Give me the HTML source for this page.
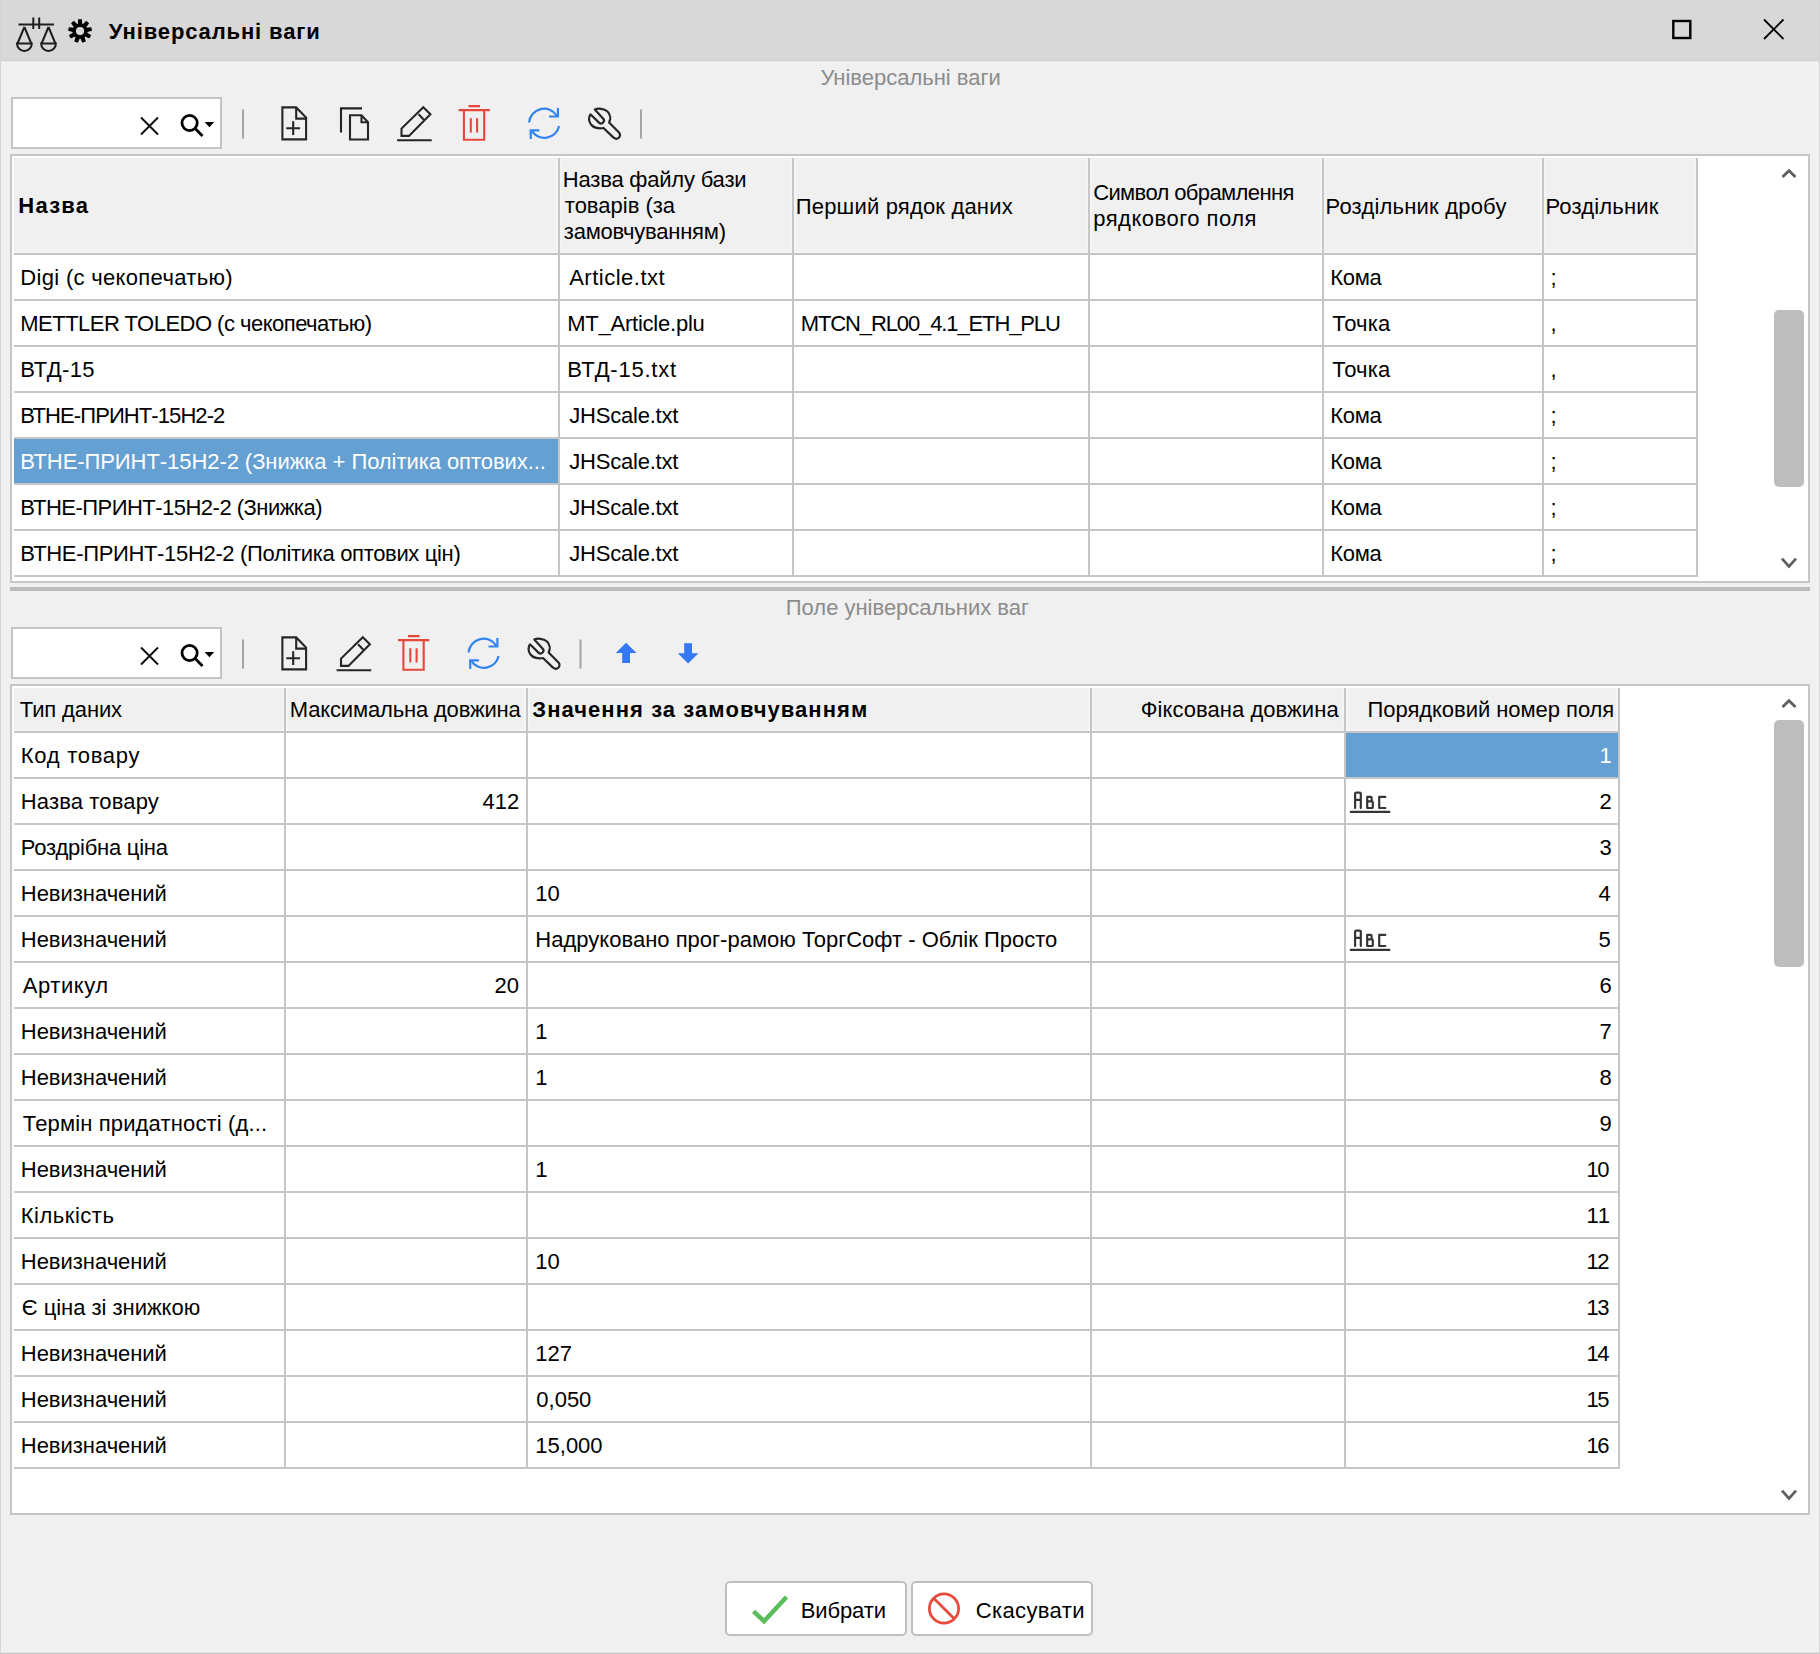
<!DOCTYPE html>
<html><head><meta charset="utf-8"><style>
html,body{margin:0;padding:0;}
body{width:1820px;height:1654px;position:relative;overflow:hidden;background:#f0f0f0;font-family:"Liberation Sans", sans-serif;}
.t{position:absolute;font-size:22px;line-height:26px;white-space:nowrap;}
svg{position:absolute;}
</style></head><body>
<div style="position:absolute;left:0px;top:0px;width:1820px;height:59px;background:#d8d8d8;"></div><div style="position:absolute;left:0px;top:59px;width:1820px;height:2px;background:#d4d4d4;"></div><div style="position:absolute;left:0px;top:61px;width:1820px;height:1px;background:#e4e4e4;"></div><div style="position:absolute;left:0px;top:62px;width:1820px;height:1px;background:#f3f3f3;"></div><div style="position:absolute;left:0px;top:0px;width:1px;height:1654px;background:#d4d4d4;"></div><div style="position:absolute;left:1819px;top:0px;width:1px;height:1654px;background:#d4d4d4;"></div><div style="position:absolute;left:0px;top:1653px;width:1820px;height:1px;background:#c6c6c6;"></div><div style="position:absolute;left:1px;top:62px;width:1px;height:1591px;background:#f3f3f3;"></div><div style="position:absolute;left:1818px;top:62px;width:1px;height:1591px;background:#f3f3f3;"></div><div style="position:absolute;left:1px;top:1651px;width:1818px;height:1px;background:#f3f3f3;"></div><div style="position:absolute;left:1px;top:1652px;width:1818px;height:1px;background:#e2e2e2;"></div><svg style="position:absolute;left:0;top:0" width="120" height="60" viewBox="0 0 120 60">
<g fill="none" stroke="#1e1e1e" stroke-width="2">
<line x1="18.5" y1="24.5" x2="54" y2="24.5"/>
<line x1="33.3" y1="17.5" x2="33.3" y2="29"/>
<line x1="39.2" y1="17.5" x2="39.2" y2="29"/>
<path d="M24.4 27 L17.5 43.5 M24.4 27 L31.3 43.5"/>
<path d="M48.5 27 L41.6 43.5 M48.5 27 L55.4 43.5"/>
<path d="M17 43.5 H31.8 A7.4 7.4 0 0 1 17 43.5 Z"/>
<path d="M41.1 43.5 H55.9 A7.4 7.4 0 0 1 41.1 43.5 Z"/>
</g>
<g transform="translate(80.05 31.05)">
<circle r="5.8" fill="none" stroke="#000" stroke-width="3.4"/>
<path d="M-2.3 -6 L-1.9 -11.8 H1.9 L2.3 -6 Z" fill="#000" transform="rotate(0)"/><path d="M-2.3 -6 L-1.9 -11.8 H1.9 L2.3 -6 Z" fill="#000" transform="rotate(40)"/><path d="M-2.3 -6 L-1.9 -11.8 H1.9 L2.3 -6 Z" fill="#000" transform="rotate(80)"/><path d="M-2.3 -6 L-1.9 -11.8 H1.9 L2.3 -6 Z" fill="#000" transform="rotate(120)"/><path d="M-2.3 -6 L-1.9 -11.8 H1.9 L2.3 -6 Z" fill="#000" transform="rotate(160)"/><path d="M-2.3 -6 L-1.9 -11.8 H1.9 L2.3 -6 Z" fill="#000" transform="rotate(200)"/><path d="M-2.3 -6 L-1.9 -11.8 H1.9 L2.3 -6 Z" fill="#000" transform="rotate(240)"/><path d="M-2.3 -6 L-1.9 -11.8 H1.9 L2.3 -6 Z" fill="#000" transform="rotate(280)"/><path d="M-2.3 -6 L-1.9 -11.8 H1.9 L2.3 -6 Z" fill="#000" transform="rotate(320)"/>
</g>
</svg><svg style="position:absolute;left:1650px;top:0px" width="170" height="60" viewBox="1650 0 170 60">
<rect x="1673.3" y="21" width="17" height="17" fill="none" stroke="#000" stroke-width="2.4"/>
<path d="M1764 19.5 L1783.5 39 M1783.5 19.5 L1764 39" stroke="#000" stroke-width="1.8" fill="none"/>
</svg><div style="position:absolute;left:11px;top:97px;width:211px;height:52px;background:#fff;box-sizing:border-box;border:2px solid #c4c4c4;"></div><svg style="position:absolute;left:0;top:90px" width="700" height="60" viewBox="0 90 700 60">
<path d="M141 117.5 L158 134.5 M158 117.5 L141 134.5" stroke="#111" stroke-width="2" fill="none"/>
<circle cx="189.6" cy="123" r="7.6" stroke="#000" stroke-width="2.8" fill="none"/>
<line x1="195.4" y1="128.8" x2="202.5" y2="135.9" stroke="#000" stroke-width="2.8"/>
<path d="M204.6 122 H214.2 L209.4 127.2 Z" fill="#000"/>
<rect x="242" y="109.5" width="2" height="29" fill="#a4a4a4"/>
<g fill="none" stroke="#262626" stroke-width="2.1" stroke-linejoin="miter">
<path d="M282.4 107.4 H296.2 L306.1 117.6 V139.4 H282.4 Z"/>
<path d="M296.2 107.4 V118.6 H306.1"/>
<path d="M286.3 128.2 H300.1 M293.2 121.3 V135.1"/>
</g><g fill="none" stroke="#262626" stroke-width="2.1">
<path d="M341 132.6 V108.4 H362"/>
<path d="M350 115.3 H361.5 L368 122.2 V139.5 H350 Z"/>
<path d="M361.5 115.3 V122.2 H368"/>
</g><g transform="translate(0 0)"><g fill="none" stroke="#262626" stroke-width="2.1" stroke-linejoin="miter">
<path d="M397.1 140.3 H431.7"/>
<path d="M423.3 107.2 L430.4 114.3 L409 135.9 H401.5 V128.6 Z"/>
<path d="M418.6 114.3 L423.8 119.8"/>
</g>
<g fill="none" stroke="#e5473a" stroke-width="2.1">
<path d="M458.6 110.1 H489.8 M468.5 106.1 H480"/>
<path d="M463.9 110.1 V139.7 H484.2 V110.1"/>
<path d="M470.8 118.2 V132.6 M477.1 118.2 V132.6"/>
</g>
<g fill="none" stroke="#3284f2" stroke-width="2.2">
<path d="M529.1 122.5 A15 15 0 0 1 556.8 115.8"/>
<path d="M557.9 108 V116.5 H549"/>
<path d="M559.1 126 A15 15 0 0 1 531.6 130.6"/>
<path d="M530.7 139 V130.3 H539.4"/>
</g>
<g fill="none" stroke="#262626" stroke-width="2.2" stroke-linejoin="round">
<path d="M594.8 109.6 C598 108 604 108.5 607.5 111.5 C610.5 114.5 611 119 609.1 122.5 L619 132.5 A3.6 3.6 0 0 1 613.5 137.6 L603.5 128 C599 129 593.5 128 591 124.5 C588.5 121.5 588.5 117 590.4 114.3 L599 122.6 A2.9 2.9 0 0 0 603 118.4 Z"/>
</g>
<rect x="640" y="109.5" width="2" height="29" fill="#a4a4a4"/>
</g></svg><div style="position:absolute;left:11px;top:627px;width:211px;height:52px;background:#fff;box-sizing:border-box;border:2px solid #c4c4c4;"></div><svg style="position:absolute;left:0;top:620px" width="700" height="60" viewBox="0 90 700 60">
<path d="M141 117.5 L158 134.5 M158 117.5 L141 134.5" stroke="#111" stroke-width="2" fill="none"/>
<circle cx="189.6" cy="123" r="7.6" stroke="#000" stroke-width="2.8" fill="none"/>
<line x1="195.4" y1="128.8" x2="202.5" y2="135.9" stroke="#000" stroke-width="2.8"/>
<path d="M204.6 122 H214.2 L209.4 127.2 Z" fill="#000"/>
<rect x="242" y="109.5" width="2" height="29" fill="#a4a4a4"/>
<g fill="none" stroke="#262626" stroke-width="2.1" stroke-linejoin="miter">
<path d="M282.4 107.4 H296.2 L306.1 117.6 V139.4 H282.4 Z"/>
<path d="M296.2 107.4 V118.6 H306.1"/>
<path d="M286.3 128.2 H300.1 M293.2 121.3 V135.1"/>
</g><g transform="translate(-60.5 0)"><g fill="none" stroke="#262626" stroke-width="2.1" stroke-linejoin="miter">
<path d="M397.1 140.3 H431.7"/>
<path d="M423.3 107.2 L430.4 114.3 L409 135.9 H401.5 V128.6 Z"/>
<path d="M418.6 114.3 L423.8 119.8"/>
</g>
<g fill="none" stroke="#e5473a" stroke-width="2.1">
<path d="M458.6 110.1 H489.8 M468.5 106.1 H480"/>
<path d="M463.9 110.1 V139.7 H484.2 V110.1"/>
<path d="M470.8 118.2 V132.6 M477.1 118.2 V132.6"/>
</g>
<g fill="none" stroke="#3284f2" stroke-width="2.2">
<path d="M529.1 122.5 A15 15 0 0 1 556.8 115.8"/>
<path d="M557.9 108 V116.5 H549"/>
<path d="M559.1 126 A15 15 0 0 1 531.6 130.6"/>
<path d="M530.7 139 V130.3 H539.4"/>
</g>
<g fill="none" stroke="#262626" stroke-width="2.2" stroke-linejoin="round">
<path d="M594.8 109.6 C598 108 604 108.5 607.5 111.5 C610.5 114.5 611 119 609.1 122.5 L619 132.5 A3.6 3.6 0 0 1 613.5 137.6 L603.5 128 C599 129 593.5 128 591 124.5 C588.5 121.5 588.5 117 590.4 114.3 L599 122.6 A2.9 2.9 0 0 0 603 118.4 Z"/>
</g>
<rect x="640" y="109.5" width="2" height="29" fill="#a4a4a4"/>
</g><g fill="#3478f6">
<path d="M626.1 112.7 L636.5 123 H630 V133 H622.2 V123 H615.8 Z"/>
<path d="M684.2 113.2 H692 V123.3 H698.5 L688.1 133.4 L677.8 123.3 H684.2 Z"/>
</g></svg><div style="position:absolute;left:10px;top:154px;width:1800px;height:429px;background:#fff;box-sizing:border-box;border:2px solid #c6c6c6;"></div><div style="position:absolute;left:14px;top:158px;width:1684px;height:95px;background:#f0f0f0;"></div><div style="position:absolute;left:14px;top:253px;width:1684px;height:2px;background:#c6c6c6;"></div><div style="position:absolute;left:14px;top:299px;width:1684px;height:2px;background:#c6c6c6;"></div><div style="position:absolute;left:14px;top:345px;width:1684px;height:2px;background:#c6c6c6;"></div><div style="position:absolute;left:14px;top:391px;width:1684px;height:2px;background:#c6c6c6;"></div><div style="position:absolute;left:14px;top:437px;width:1684px;height:2px;background:#c6c6c6;"></div><div style="position:absolute;left:14px;top:483px;width:1684px;height:2px;background:#c6c6c6;"></div><div style="position:absolute;left:14px;top:529px;width:1684px;height:2px;background:#c6c6c6;"></div><div style="position:absolute;left:14px;top:575px;width:1684px;height:2px;background:#c6c6c6;"></div><div style="position:absolute;left:558px;top:158px;width:2px;height:419px;background:#c6c6c6;"></div><div style="position:absolute;left:792px;top:158px;width:2px;height:419px;background:#c6c6c6;"></div><div style="position:absolute;left:1088px;top:158px;width:2px;height:419px;background:#c6c6c6;"></div><div style="position:absolute;left:1322px;top:158px;width:2px;height:419px;background:#c6c6c6;"></div><div style="position:absolute;left:1542px;top:158px;width:2px;height:419px;background:#c6c6c6;"></div><div style="position:absolute;left:1696px;top:158px;width:2px;height:419px;background:#c6c6c6;"></div><div style="position:absolute;left:14px;top:251px;width:544px;height:2px;background:#f5f5f5;"></div><div style="position:absolute;left:556px;top:158px;width:2px;height:93px;background:#f5f5f5;"></div><div style="position:absolute;left:560px;top:251px;width:232px;height:2px;background:#f5f5f5;"></div><div style="position:absolute;left:560px;top:158px;width:2px;height:93px;background:#f5f5f5;"></div><div style="position:absolute;left:790px;top:158px;width:2px;height:93px;background:#f5f5f5;"></div><div style="position:absolute;left:794px;top:251px;width:294px;height:2px;background:#f5f5f5;"></div><div style="position:absolute;left:794px;top:158px;width:2px;height:93px;background:#f5f5f5;"></div><div style="position:absolute;left:1086px;top:158px;width:2px;height:93px;background:#f5f5f5;"></div><div style="position:absolute;left:1090px;top:251px;width:232px;height:2px;background:#f5f5f5;"></div><div style="position:absolute;left:1090px;top:158px;width:2px;height:93px;background:#f5f5f5;"></div><div style="position:absolute;left:1320px;top:158px;width:2px;height:93px;background:#f5f5f5;"></div><div style="position:absolute;left:1324px;top:251px;width:218px;height:2px;background:#f5f5f5;"></div><div style="position:absolute;left:1324px;top:158px;width:2px;height:93px;background:#f5f5f5;"></div><div style="position:absolute;left:1540px;top:158px;width:2px;height:93px;background:#f5f5f5;"></div><div style="position:absolute;left:1544px;top:251px;width:152px;height:2px;background:#f5f5f5;"></div><div style="position:absolute;left:1544px;top:158px;width:2px;height:93px;background:#f5f5f5;"></div><div style="position:absolute;left:1694px;top:158px;width:2px;height:93px;background:#f5f5f5;"></div><div style="position:absolute;left:10px;top:684px;width:1800px;height:831px;background:#fff;box-sizing:border-box;border:2px solid #c6c6c6;"></div><div style="position:absolute;left:14px;top:688px;width:1606px;height:43px;background:#f0f0f0;"></div><div style="position:absolute;left:14px;top:731px;width:1606px;height:2px;background:#c6c6c6;"></div><div style="position:absolute;left:14px;top:777px;width:1606px;height:2px;background:#c6c6c6;"></div><div style="position:absolute;left:14px;top:823px;width:1606px;height:2px;background:#c6c6c6;"></div><div style="position:absolute;left:14px;top:869px;width:1606px;height:2px;background:#c6c6c6;"></div><div style="position:absolute;left:14px;top:915px;width:1606px;height:2px;background:#c6c6c6;"></div><div style="position:absolute;left:14px;top:961px;width:1606px;height:2px;background:#c6c6c6;"></div><div style="position:absolute;left:14px;top:1007px;width:1606px;height:2px;background:#c6c6c6;"></div><div style="position:absolute;left:14px;top:1053px;width:1606px;height:2px;background:#c6c6c6;"></div><div style="position:absolute;left:14px;top:1099px;width:1606px;height:2px;background:#c6c6c6;"></div><div style="position:absolute;left:14px;top:1145px;width:1606px;height:2px;background:#c6c6c6;"></div><div style="position:absolute;left:14px;top:1191px;width:1606px;height:2px;background:#c6c6c6;"></div><div style="position:absolute;left:14px;top:1237px;width:1606px;height:2px;background:#c6c6c6;"></div><div style="position:absolute;left:14px;top:1283px;width:1606px;height:2px;background:#c6c6c6;"></div><div style="position:absolute;left:14px;top:1329px;width:1606px;height:2px;background:#c6c6c6;"></div><div style="position:absolute;left:14px;top:1375px;width:1606px;height:2px;background:#c6c6c6;"></div><div style="position:absolute;left:14px;top:1421px;width:1606px;height:2px;background:#c6c6c6;"></div><div style="position:absolute;left:14px;top:1467px;width:1606px;height:2px;background:#c6c6c6;"></div><div style="position:absolute;left:284px;top:688px;width:2px;height:781px;background:#c6c6c6;"></div><div style="position:absolute;left:526px;top:688px;width:2px;height:781px;background:#c6c6c6;"></div><div style="position:absolute;left:1090px;top:688px;width:2px;height:781px;background:#c6c6c6;"></div><div style="position:absolute;left:1344px;top:688px;width:2px;height:781px;background:#c6c6c6;"></div><div style="position:absolute;left:1618px;top:688px;width:2px;height:781px;background:#c6c6c6;"></div><div style="position:absolute;left:14px;top:729px;width:270px;height:2px;background:#f5f5f5;"></div><div style="position:absolute;left:282px;top:688px;width:2px;height:41px;background:#f5f5f5;"></div><div style="position:absolute;left:286px;top:729px;width:240px;height:2px;background:#f5f5f5;"></div><div style="position:absolute;left:286px;top:688px;width:2px;height:41px;background:#f5f5f5;"></div><div style="position:absolute;left:524px;top:688px;width:2px;height:41px;background:#f5f5f5;"></div><div style="position:absolute;left:528px;top:729px;width:562px;height:2px;background:#f5f5f5;"></div><div style="position:absolute;left:528px;top:688px;width:2px;height:41px;background:#f5f5f5;"></div><div style="position:absolute;left:1088px;top:688px;width:2px;height:41px;background:#f5f5f5;"></div><div style="position:absolute;left:1092px;top:729px;width:252px;height:2px;background:#f5f5f5;"></div><div style="position:absolute;left:1092px;top:688px;width:2px;height:41px;background:#f5f5f5;"></div><div style="position:absolute;left:1342px;top:688px;width:2px;height:41px;background:#f5f5f5;"></div><div style="position:absolute;left:1346px;top:729px;width:272px;height:2px;background:#f5f5f5;"></div><div style="position:absolute;left:1346px;top:688px;width:2px;height:41px;background:#f5f5f5;"></div><div style="position:absolute;left:1616px;top:688px;width:2px;height:41px;background:#f5f5f5;"></div><svg style="position:absolute;left:1770px;top:154px" width="40" height="429" viewBox="1770 154 40 429">
<path d="M1782.5 177 L1789 170.7 L1795.5 177" stroke="#5f5f5f" stroke-width="2.8" fill="none"/>
<path d="M1782 558.6 L1789 566.4 L1796 558.6" stroke="#5f5f5f" stroke-width="2.8" fill="none"/>
</svg><div style="position:absolute;left:1774px;top:310px;width:30px;height:177px;background:#bdbdbd;border-radius:5px;"></div><svg style="position:absolute;left:1770px;top:684px" width="40" height="831" viewBox="1770 684 40 831">
<path d="M1782.5 707 L1789 700.7 L1795.5 707" stroke="#5f5f5f" stroke-width="2.8" fill="none"/>
<path d="M1782 1490.6 L1789 1498.4 L1796 1490.6" stroke="#5f5f5f" stroke-width="2.8" fill="none"/>
</svg><div style="position:absolute;left:1774px;top:720px;width:30px;height:247px;background:#bdbdbd;border-radius:5px;"></div><div style="position:absolute;left:10px;top:587px;width:1800px;height:4px;background:#bcbcbc;"></div><div style="position:absolute;left:14px;top:439px;width:544px;height:44px;background:#64a0d2;"></div><div style="position:absolute;left:1346px;top:733px;width:272px;height:44px;background:#64a0d2;"></div><svg style="position:absolute;left:1340px;top:780px" width="60" height="45" viewBox="1340 780 60 45">
<g fill="none" stroke="#353535" stroke-width="2.2" stroke-linecap="round" stroke-linejoin="round">
<path d="M1355.1 808 V793.8 Q1355.1 792.7 1356.2 792.7 H1359.7 Q1360.8 792.7 1360.8 793.8 V808 M1355.1 799.8 H1360.8"/>
<path d="M1367.2 808 V796.9 H1370.8 Q1371.6 796.9 1371.6 797.7 V801.4 M1367.2 801.4 H1372 Q1372.8 801.4 1372.8 802.2 V807.2 Q1372.8 808 1372 808 H1367.2"/>
<path d="M1385.3 796.9 H1379.2 V808 H1385.3"/>
<path d="M1350.8 811.9 H1389.4"/>
</g></svg><svg style="position:absolute;left:1340px;top:918px" width="60" height="45" viewBox="1340 780 60 45">
<g fill="none" stroke="#353535" stroke-width="2.2" stroke-linecap="round" stroke-linejoin="round">
<path d="M1355.1 808 V793.8 Q1355.1 792.7 1356.2 792.7 H1359.7 Q1360.8 792.7 1360.8 793.8 V808 M1355.1 799.8 H1360.8"/>
<path d="M1367.2 808 V796.9 H1370.8 Q1371.6 796.9 1371.6 797.7 V801.4 M1367.2 801.4 H1372 Q1372.8 801.4 1372.8 802.2 V807.2 Q1372.8 808 1372 808 H1367.2"/>
<path d="M1385.3 796.9 H1379.2 V808 H1385.3"/>
<path d="M1350.8 811.9 H1389.4"/>
</g></svg><div style="position:absolute;left:725px;top:1581px;width:182px;height:55px;box-sizing:border-box;border:2px solid #bfbfbf;border-radius:5px;background:#fff"></div><svg style="position:absolute;left:740px;top:1590px" width="60" height="40" viewBox="740 1590 60 40">
<path d="M753.5 1611.3 L764 1621.2 L786.5 1597" stroke="#5cbd5c" stroke-width="4.5" fill="none"/></svg><div style="position:absolute;left:911px;top:1581px;width:182px;height:55px;box-sizing:border-box;border:2px solid #bfbfbf;border-radius:5px;background:#fff"></div><svg style="position:absolute;left:920px;top:1585px" width="50" height="50" viewBox="920 1585 50 50">
<circle cx="944" cy="1608.5" r="14.6" stroke="#e84a3c" stroke-width="2.8" fill="none"/>
<path d="M933.7 1598.2 L954.3 1618.8" stroke="#e84a3c" stroke-width="2.8"/></svg><div class="t" style="left:108.80px;top:18.50px;color:#000;font-weight:bold;letter-spacing:0.875px;">Універсальні ваги</div><div class="t" style="left:820.40px;top:64.80px;color:#8c8c8c;letter-spacing:-0.019px;">Універсальні ваги</div><div class="t" style="left:785.80px;top:595.00px;color:#8c8c8c;letter-spacing:-0.014px;">Поле універсальних ваг</div><div class="t" style="left:18.30px;top:192.50px;color:#000;font-weight:bold;letter-spacing:1.250px;">Назва</div><div class="t" style="left:562.80px;top:167.00px;color:#000;letter-spacing:-0.200px;">Назва файлу бази</div><div class="t" style="left:564.80px;top:193.00px;color:#000;">товарів (за</div><div class="t" style="left:563.80px;top:219.00px;color:#000;letter-spacing:-0.231px;">замовчуванням)</div><div class="t" style="left:795.80px;top:193.50px;color:#000;letter-spacing:0.176px;">Перший рядок даних</div><div class="t" style="left:1093.20px;top:180.00px;color:#000;letter-spacing:-0.625px;">Символ обрамлення</div><div class="t" style="left:1093.20px;top:206.00px;color:#000;letter-spacing:0.492px;">рядкового поля</div><div class="t" style="left:1325.50px;top:193.50px;color:#000;letter-spacing:0.200px;">Роздільник дробу</div><div class="t" style="left:1545.50px;top:193.50px;color:#000;letter-spacing:0.167px;">Роздільник</div><div class="t" style="left:20.30px;top:265.30px;color:#000;letter-spacing:0.316px;">Digi (с чекопечатью)</div><div class="t" style="left:569.20px;top:265.30px;color:#000;letter-spacing:0.500px;">Article.txt</div><div class="t" style="left:1330.30px;top:265.30px;color:#000;letter-spacing:-0.333px;">Кома</div><div class="t" style="left:1550.60px;top:265.30px;color:#000;">;</div><div class="t" style="left:20.30px;top:311.30px;color:#000;letter-spacing:-0.517px;">METTLER TOLEDO (с чекопечатью)</div><div class="t" style="left:567.20px;top:311.30px;color:#000;letter-spacing:-0.231px;">MT_Article.plu</div><div class="t" style="left:800.70px;top:311.30px;color:#000;letter-spacing:-1.115px;">MTCN_RL00_4.1_ETH_PLU</div><div class="t" style="left:1332.30px;top:311.30px;color:#000;letter-spacing:0.175px;">Точка</div><div class="t" style="left:1550.60px;top:311.30px;color:#000;">,</div><div class="t" style="left:20.30px;top:357.30px;color:#000;letter-spacing:0.320px;">ВТД-15</div><div class="t" style="left:567.20px;top:357.30px;color:#000;letter-spacing:0.778px;">ВТД-15.txt</div><div class="t" style="left:1332.30px;top:357.30px;color:#000;letter-spacing:0.175px;">Точка</div><div class="t" style="left:1550.60px;top:357.30px;color:#000;">,</div><div class="t" style="left:20.30px;top:403.30px;color:#000;letter-spacing:-0.912px;">ВТНЕ-ПРИНТ-15Н2-2</div><div class="t" style="left:569.20px;top:403.30px;color:#000;letter-spacing:-0.200px;">JHScale.txt</div><div class="t" style="left:1330.30px;top:403.30px;color:#000;letter-spacing:-0.333px;">Кома</div><div class="t" style="left:1550.60px;top:403.30px;color:#000;">;</div><div class="t" style="left:20.30px;top:449.30px;color:#fff;letter-spacing:-0.065px;">ВТНЕ-ПРИНТ-15Н2-2 (Знижка + Політика оптових...</div><div class="t" style="left:569.20px;top:449.30px;color:#000;letter-spacing:-0.200px;">JHScale.txt</div><div class="t" style="left:1330.30px;top:449.30px;color:#000;letter-spacing:-0.333px;">Кома</div><div class="t" style="left:1550.60px;top:449.30px;color:#000;">;</div><div class="t" style="left:20.30px;top:495.30px;color:#000;letter-spacing:-0.520px;">ВТНЕ-ПРИНТ-15Н2-2 (Знижка)</div><div class="t" style="left:569.20px;top:495.30px;color:#000;letter-spacing:-0.200px;">JHScale.txt</div><div class="t" style="left:1330.30px;top:495.30px;color:#000;letter-spacing:-0.333px;">Кома</div><div class="t" style="left:1550.60px;top:495.30px;color:#000;">;</div><div class="t" style="left:20.30px;top:541.30px;color:#000;letter-spacing:-0.333px;">ВТНЕ-ПРИНТ-15Н2-2 (Політика оптових цін)</div><div class="t" style="left:569.20px;top:541.30px;color:#000;letter-spacing:-0.200px;">JHScale.txt</div><div class="t" style="left:1330.30px;top:541.30px;color:#000;letter-spacing:-0.333px;">Кома</div><div class="t" style="left:1550.60px;top:541.30px;color:#000;">;</div><div class="t" style="left:19.80px;top:696.50px;color:#000;letter-spacing:-0.125px;">Тип даних</div><div class="t" style="left:289.80px;top:696.50px;color:#000;letter-spacing:-0.167px;">Максимальна довжина</div><div class="t" style="left:532.30px;top:696.50px;color:#000;font-weight:bold;letter-spacing:1.062px;">Значення за замовчуванням</div><div class="t" style="left:1140.80px;top:696.50px;color:#000;letter-spacing:0.050px;">Фіксована довжина</div><div class="t" style="left:1367.50px;top:696.50px;color:#000;letter-spacing:-0.050px;">Порядковий номер поля</div><div class="t" style="left:20.80px;top:743.30px;color:#000;letter-spacing:0.722px;">Код товару</div><div class="t" style="left:1599.50px;top:743.30px;color:#fff;">1</div><div class="t" style="left:20.80px;top:789.30px;color:#000;letter-spacing:0.136px;">Назва товару</div><div class="t" style="left:482.50px;top:789.30px;color:#000;">412</div><div class="t" style="left:1599.50px;top:789.30px;color:#000;">2</div><div class="t" style="left:20.80px;top:835.30px;color:#000;letter-spacing:-0.231px;">Роздрібна ціна</div><div class="t" style="left:1599.50px;top:835.30px;color:#000;">3</div><div class="t" style="left:20.80px;top:881.30px;color:#000;letter-spacing:-0.036px;">Невизначений</div><div class="t" style="left:535.30px;top:881.30px;color:#000;">10</div><div class="t" style="left:1598.50px;top:881.30px;color:#000;">4</div><div class="t" style="left:20.80px;top:927.30px;color:#000;letter-spacing:-0.036px;">Невизначений</div><div class="t" style="left:535.30px;top:927.30px;color:#000;letter-spacing:0.011px;">Надруковано прог-рамою ТоргСофт - Облік Просто</div><div class="t" style="left:1598.50px;top:927.30px;color:#000;">5</div><div class="t" style="left:22.80px;top:973.30px;color:#000;letter-spacing:0.550px;">Артикул</div><div class="t" style="left:494.50px;top:973.30px;color:#000;">20</div><div class="t" style="left:1599.50px;top:973.30px;color:#000;">6</div><div class="t" style="left:20.80px;top:1019.30px;color:#000;letter-spacing:-0.036px;">Невизначений</div><div class="t" style="left:535.30px;top:1019.30px;color:#000;">1</div><div class="t" style="left:1599.50px;top:1019.30px;color:#000;">7</div><div class="t" style="left:20.80px;top:1065.30px;color:#000;letter-spacing:-0.036px;">Невизначений</div><div class="t" style="left:535.30px;top:1065.30px;color:#000;">1</div><div class="t" style="left:1599.50px;top:1065.30px;color:#000;">8</div><div class="t" style="left:22.80px;top:1111.30px;color:#000;letter-spacing:0.143px;">Термін придатності (д...</div><div class="t" style="left:1599.50px;top:1111.30px;color:#000;">9</div><div class="t" style="left:20.80px;top:1157.30px;color:#000;letter-spacing:-0.036px;">Невизначений</div><div class="t" style="left:535.30px;top:1157.30px;color:#000;">1</div><div class="t" style="left:1586.60px;top:1157.30px;color:#000;letter-spacing:-1.500px;">10</div><div class="t" style="left:20.80px;top:1203.30px;color:#000;letter-spacing:0.500px;">Кількість</div><div class="t" style="left:1586.60px;top:1203.30px;color:#000;letter-spacing:0.500px;">11</div><div class="t" style="left:20.80px;top:1249.30px;color:#000;letter-spacing:-0.036px;">Невизначений</div><div class="t" style="left:535.30px;top:1249.30px;color:#000;">10</div><div class="t" style="left:1586.60px;top:1249.30px;color:#000;letter-spacing:-1.500px;">12</div><div class="t" style="left:21.80px;top:1295.30px;color:#000;letter-spacing:-0.031px;">Є ціна зі знижкою</div><div class="t" style="left:1586.60px;top:1295.30px;color:#000;letter-spacing:-1.500px;">13</div><div class="t" style="left:20.80px;top:1341.30px;color:#000;letter-spacing:-0.036px;">Невизначений</div><div class="t" style="left:535.30px;top:1341.30px;color:#000;">127</div><div class="t" style="left:1586.60px;top:1341.30px;color:#000;letter-spacing:-1.500px;">14</div><div class="t" style="left:20.80px;top:1387.30px;color:#000;letter-spacing:-0.036px;">Невизначений</div><div class="t" style="left:536.30px;top:1387.30px;color:#000;">0,050</div><div class="t" style="left:1586.60px;top:1387.30px;color:#000;letter-spacing:-1.500px;">15</div><div class="t" style="left:20.80px;top:1433.30px;color:#000;letter-spacing:-0.036px;">Невизначений</div><div class="t" style="left:535.30px;top:1433.30px;color:#000;">15,000</div><div class="t" style="left:1586.60px;top:1433.30px;color:#000;letter-spacing:-1.500px;">16</div><div class="t" style="left:800.70px;top:1598.40px;color:#000;letter-spacing:-0.100px;">Вибрати</div><div class="t" style="left:975.70px;top:1598.40px;color:#000;letter-spacing:0.375px;">Скасувати</div>
</body></html>
